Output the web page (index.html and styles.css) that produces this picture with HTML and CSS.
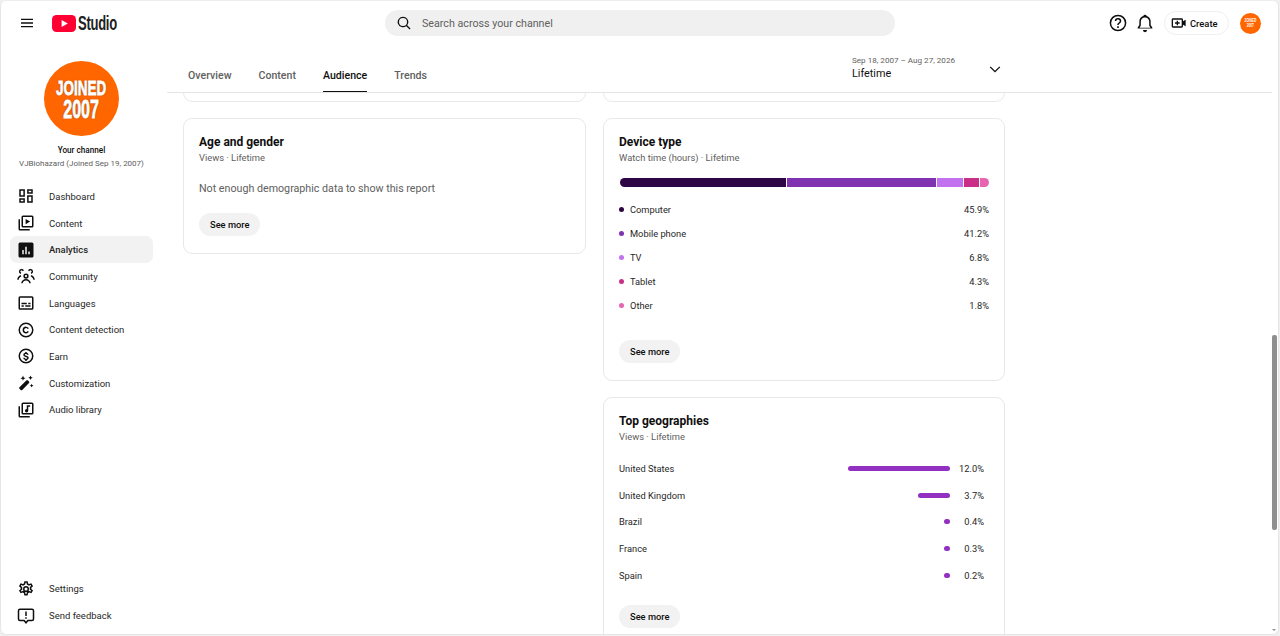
FILE: index.html
```html
<!DOCTYPE html>
<html lang="en">
<head>
  <meta charset="UTF-8">
  <meta name="viewport" content="width=device-width, initial-scale=1.0">
  <title>Channel analytics - YouTube Studio</title>
  <link rel="stylesheet" href="styles.css">
</head>
<body>
  <div class="app">
    <header class="topbar">
      <div class="brand">
        <svg class="icon menu-icon" viewBox="0 0 24 24"><path d="M3 5.5h18v2H3zM3 11h18v2H3zM3 16.5h18v2H3z"/></svg>
        <svg class="yt-logo" viewBox="0 0 24 17"><rect width="24" height="17" rx="4.5" fill="#ff0033"/><path d="M9.6 4.9v7.2l6.2-3.6z" fill="#fff"/></svg>
        <span class="studio">Studio</span>
      </div>
      <div class="search">
        <svg class="icon search-icon" viewBox="0 0 24 24"><path d="M10.5 2.5a8 8 0 0 1 6.3 12.9l5 5-1.4 1.4-5-5A8 8 0 1 1 10.500 2.500zm0 2a6 6 0 1 0 0 12 6 6 0 0 0 0-12z"/></svg>
        <span>Search across your channel</span>
      </div>
      <div class="top-actions">
        <svg class="icon action-icon" viewBox="0 0 24 24"><path d="M12 2a10 10 0 1 1 0 20 10 10 0 0 1 0-20zm0 1.800a8.200 8.200 0 1 0 0 16.400 8.200 8.200 0 0 0 0-16.400zM11 16h2v2h-2zm1-10a3.700 3.700 0 0 1 3.900 3.600c0 1.500-.9 2.200-1.800 2.900-.7.500-1.200 1-1.200 2h-1.800c0-1.700.9-2.400 1.800-3.100.7-.5 1.200-.9 1.200-1.700 0-1-.9-1.900-2.100-1.900-1.100 0-2 .8-2.100 1.900H8.100A3.800 3.800 0 0 1 12 6z"/></svg>
        <svg class="icon action-icon" viewBox="0 0 24 24"><path d="M12 2a2 2 0 0 1 2 1.700c3 .8 4.800 3.300 4.800 6.500v4.300l2 2.800v1.200H3.200v-1.200l2-2.800v-4.300c0-3.200 1.800-5.700 4.800-6.500A2 2 0 0 1 12 2zm0 3.300c-3 0-5 2.100-5 5V15l-1.500 2.700h13L17 15v-4.700c0-2.900-2-5-5-5zM9.500 20.500h5a2.500 2.500 0 0 1-5 0z"/></svg>
        <div class="create-btn">
          <svg class="icon create-icon" viewBox="0 0 24 24"><path d="M3 5h13a2 2 0 0 1 2 2v2.500l4-2.500v10l-4-2.500V17a2 2 0 0 1-2 2H3a2 2 0 0 1-2-2V7a2 2 0 0 1 2-2zm0 2v10h13V7zm5.500 1.500h2V11H13v2h-2.500v2.500h-2V13H6v-2h2.500z"/></svg>
          <span>Create</span>
        </div>
        <div class="avatar avatar-small"><div class="avatar-text"><span class="line-a">JOINED</span><span class="line-b">2007</span></div></div>
      </div>
    </header>

    <div class="layout">
      <aside class="sidebar">
        <div class="channel">
          <div class="avatar avatar-large"><div class="avatar-text"><span class="line-a">JOINED</span><span class="line-b">2007</span></div></div>
          <div class="channel-title">Your channel</div>
          <div class="channel-name">VJBiohazard (Joined Sep 19, 2007)</div>
        </div>
        <nav class="nav">
          <a class="nav-item"><svg class="icon" viewBox="0 0 24 24"><path d="M3 3h7.500v10H3zm2 2v6h3.500V5zM13.500 3H21v6h-7.500zm2 2v2H19V5zM3 15h7.500v6H3zm2 2v2h3.500v-2zM13.500 11H21v10h-7.500zm2 2v6H19v-6z"/></svg>Dashboard</a>
          <a class="nav-item"><svg class="icon" viewBox="0 0 24 24"><path d="M8 2h12a2 2 0 0 1 2 2v12a2 2 0 0 1-2 2H8a2 2 0 0 1-2-2V4a2 2 0 0 1 2-2zm0 2v12h12V4zM2 7h2v13h13v2H4a2 2 0 0 1-2-2zm9.500-.500 6 3.500-6 3.500z"/></svg>Content</a>
          <a class="nav-item active"><svg class="icon" viewBox="0 0 24 24"><path d="M4 2h16a2 2 0 0 1 2 2v16a2 2 0 0 1-2 2H4a2 2 0 0 1-2-2V4a2 2 0 0 1 2-2zm3 10v5.500h2V12zm4-4.500v10h2v-10zm4 6.500v3.500h2V14z"/></svg>Analytics</a>
          <a class="nav-item"><svg class="icon" viewBox="0 0 24 24"><path d="M12 8.500a3.500 3.500 0 1 1 0 7 3.500 3.500 0 0 1 0-7zm0 2a1.500 1.500 0 1 0 0 3 1.500 1.500 0 0 0 0-3zM6 2.500a3.500 3.500 0 0 1 3.300 2.300L7.500 5.600A1.500 1.500 0 1 0 5.500 7.400l-.3 2A3.500 3.500 0 0 1 6 2.500zm12 0a3.500 3.500 0 0 1 .8 6.900l-.3-2a1.500 1.500 0 1 0-2-1.800l-1.800-.8A3.500 3.500 0 0 1 18 2.500zM12 16c3.300 0 6 2.200 6.500 5.500h-2c-.5-2.200-2.300-3.500-4.500-3.500s-4 1.300-4.500 3.500h-2C6 18.200 8.700 16 12 16zM5 10.800l.7 1.900C3.800 13.300 2.600 14.800 2.300 17H.3C.6 14 2.300 11.600 5 10.800zm14 0c2.700.8 4.400 3.200 4.700 6.200h-2c-.3-2.200-1.500-3.700-3.400-4.300z"/></svg>Community</a>
          <a class="nav-item"><svg class="icon" viewBox="0 0 24 24"><path d="M4 3h16a2 2 0 0 1 2 2v14a2 2 0 0 1-2 2H4a2 2 0 0 1-2-2V5a2 2 0 0 1 2-2zm0 2v14h16V5zm2 6.500h7v2H6zm9 0h3v2h-3zM6 15h3v2H6zm5 0h7v2h-7z"/></svg>Languages</a>
          <a class="nav-item"><svg class="icon" viewBox="0 0 24 24"><path d="M12 2a10 10 0 1 1 0 20 10 10 0 0 1 0-20zm0 2a8 8 0 1 0 0 16 8 8 0 0 0 0-16zm0 3.500a4.500 4.500 0 0 1 3.900 2.300l-1.700 1a2.500 2.500 0 1 0 0 2.400l1.700 1A4.500 4.500 0 1 1 12 7.500z"/></svg>Content detection</a>
          <a class="nav-item"><svg class="icon" viewBox="0 0 24 24"><path d="M12 2a10 10 0 1 1 0 20 10 10 0 0 1 0-20zm0 2a8 8 0 1 0 0 16 8 8 0 0 0 0-16zm-1 2.500h2v1.100c1.300.3 2.300 1.200 2.500 2.600h-2c-.2-.7-.7-1-1.500-1-1 0-1.600.4-1.600 1 0 .7.600.9 2 1.300 1.700.4 3.200 1 3.200 3 0 1.500-1.100 2.400-2.600 2.700v1.300h-2v-1.300c-1.500-.3-2.600-1.300-2.800-2.800h2c.2.800.8 1.200 1.800 1.200 1.100 0 1.600-.5 1.600-1.100 0-.7-.6-.9-2.200-1.300-1.600-.5-3-1.100-3-2.900 0-1.400 1.100-2.400 2.600-2.700z"/></svg>Earn</a>
          <a class="nav-item"><svg class="icon" viewBox="0 0 24 24"><path d="M14.500 8.500 16 10a1.500 1.500 0 0 1 0 2.100L7 21.200a1.500 1.500 0 0 1-2.100 0l-1.600-1.600a1.500 1.500 0 0 1 0-2.100l9.100-9a1.500 1.500 0 0 1 2.100 0zM8 2l1 2.500L11.500 5.500 9 6.500 8 9 7 6.500 4.500 5.500 7 4.500zm10 0 .9 2.100L21 5l-2.100.9L18 8l-.9-2.100L15 5l2.100-.9zm1.500 11 .8 1.700 1.700.8-1.700.8-.8 1.700-.8-1.700-1.700-.8 1.700-.8z"/></svg>Customization</a>
          <a class="nav-item"><svg class="icon" viewBox="0 0 24 24"><path d="M8 2h12a2 2 0 0 1 2 2v12a2 2 0 0 1-2 2H8a2 2 0 0 1-2-2V4a2 2 0 0 1 2-2zm0 2v12h12V4zM2 7h2v13h13v2H4a2 2 0 0 1-2-2zm13-1.500h2.500v2H15v5.500a2.200 2.200 0 1 1-2-2.200V5.500z"/></svg>Audio library</a>
        </nav>
        <nav class="nav nav-bottom">
          <a class="nav-item"><svg class="icon" viewBox="0 0 24 24"><path d="M12 8a4 4 0 1 1 0 8 4 4 0 0 1 0-8zm0 2a2 2 0 1 0 0 4 2 2 0 0 0 0-4zM9.800 1.500h4.400l.6 3 1.500.9 2.900-1 2.200 3.800-2.300 2c.1.500.1 1.200 0 1.700l2.300 2-2.200 3.800-2.900-1-1.500.9-.6 3H9.800l-.6-3-1.500-.9-2.900 1-2.200-3.800 2.300-2a5 5 0 0 1 0-1.700l-2.300-2 2.200-3.800 2.900 1 1.500-.9zm1.600 2-.5 2.600-2.700 1.500-2.500-.9-.6 1.100 2 1.700c-.2 1-.2 2 0 3l-2 1.700.6 1.100 2.500-.9 2.700 1.500.5 2.600h1.200l.5-2.600 2.700-1.500 2.500.9.600-1.100-2-1.700c.2-1 .2-2 0-3l2-1.700-.6-1.100-2.500.9-2.700-1.500-.5-2.600z"/></svg>Settings</a>
          <a class="nav-item"><svg class="icon" viewBox="0 0 24 24"><path d="M4 2h16a3 3 0 0 1 3 3v11a3 3 0 0 1-3 3h-5l-3 3.500L9 19H4a3 3 0 0 1-3-3V5a3 3 0 0 1 3-3zm0 2a1 1 0 0 0-1 1v11a1 1 0 0 0 1 1h6l2 2.300 2-2.300h6a1 1 0 0 0 1-1V5a1 1 0 0 0-1-1zm7 2h2v6h-2zm0 7.500h2v2h-2z"/></svg>Send feedback</a>
        </nav>
      </aside>

      <main class="main">
        <div class="tabs-bar">
          <div class="tabs">
            <span class="tab">Overview</span>
            <span class="tab">Content</span>
            <span class="tab active">Audience</span>
            <span class="tab">Trends</span>
          </div>
          <div class="date-picker">
            <div>
              <div class="date-range">Sep 18, 2007 – Aug 27, 2026</div>
              <div class="date-label">Lifetime</div>
            </div>
            <svg class="icon chevron" viewBox="0 0 24 24"><path d="M4.600 7.500 12 14.900l7.400-7.400 1.600 1.600-9 9-9-9z"/></svg>
          </div>
        </div>

        <div class="report">
          <div class="column">
            <div class="card card-stub"></div>
            <section class="card card-age">
              <h2>Age and gender</h2>
              <div class="card-sub">Views · Lifetime</div>
              <p class="empty">Not enough demographic data to show this report</p>
              <span class="see-more">See more</span>
            </section>
          </div>
          <div class="column column-right">
            <div class="card card-stub"></div>
            <section class="card card-device">
              <h2>Device type</h2>
              <div class="card-sub">Watch time (hours) · Lifetime</div>
              <div class="stack-bar">
                <span class="seg c-computer" style="width:45.1%"></span>
                <span class="seg c-mobile" style="width:40.4%"></span>
                <span class="seg c-tv" style="width:6.8%"></span>
                <span class="seg c-tablet" style="width:4.2%"></span>
                <span class="seg c-other" style="flex:1"></span>
              </div>
              <ul class="legend">
                <li><i class="dot c-computer"></i><span>Computer</span><b>45.9%</b></li>
                <li><i class="dot c-mobile"></i><span>Mobile phone</span><b>41.2%</b></li>
                <li><i class="dot c-tv"></i><span>TV</span><b>6.8%</b></li>
                <li><i class="dot c-tablet"></i><span>Tablet</span><b>4.3%</b></li>
                <li><i class="dot c-other"></i><span>Other</span><b>1.8%</b></li>
              </ul>
              <span class="see-more">See more</span>
            </section>
            <section class="card card-geo">
              <h2>Top geographies</h2>
              <div class="card-sub">Views · Lifetime</div>
              <ul class="geo-list">
                <li><span>United States</span><i class="geo-bar" style="width:102px"></i><b>12.0%</b></li>
                <li><span>United Kingdom</span><i class="geo-bar" style="width:32px"></i><b>3.7%</b></li>
                <li><span>Brazil</span><i class="geo-bar" style="width:6px"></i><b>0.4%</b></li>
                <li><span>France</span><i class="geo-bar" style="width:6px"></i><b>0.3%</b></li>
                <li><span>Spain</span><i class="geo-bar" style="width:6px"></i><b>0.2%</b></li>
              </ul>
              <span class="see-more">See more</span>
            </section>
          </div>
        </div>
      </main>
    </div>
    <div class="scroll-thumb"></div>
    <div class="scroll-arrow"></div>
  </div>
</body>
</html>
```

FILE: styles.css
```css
* {
  box-sizing: border-box;
}

html, body {
  margin: 0;
  height: 100%;
  overflow: hidden;
  background: #f0f0f0;
}

body {
  font-family: Roboto, "Liberation Sans", sans-serif;
  font-size: 10px;
  color: #0f0f0f;
}

.app {
  position: relative;
  width: 1279px;
  height: 635px;
  background: #fff;
  border: 1px solid #e6e6e6;
  border-top-color: #ededed;
  border-radius: 6px;
  display: flex;
  flex-direction: column;
  overflow: hidden;
}

.icon {
  width: 16px;
  height: 16px;
  fill: #0f0f0f;
  flex: none;
}

/* top bar */
.topbar {
  height: 44px;
  flex: none;
  display: flex;
  align-items: center;
}

.brand {
  width: 384px;
  display: flex;
  align-items: center;
  padding-left: 18px;
}

.menu-icon {
  margin-right: 17px;
}

.yt-logo {
  width: 24px;
  height: 17px;
}

.studio {
  margin-left: 2px;
  font-family: "Liberation Sans", sans-serif;
  font-size: 20px;
  font-weight: 700;
  letter-spacing: -0.4px;
  color: #212121;
  transform: scaleX(0.65);
  transform-origin: left center;
}

.search {
  width: 510px;
  height: 26px;
  border-radius: 13px;
  background: #f0f0f0;
  display: flex;
  align-items: center;
  gap: 10px;
  padding-left: 11px;
  font-size: 10.7px;
  color: #606060;
}

.top-actions {
  margin-left: auto;
  display: flex;
  align-items: center;
  padding-right: 17px;
}

.action-icon {
  width: 20px;
  height: 20px;
  margin-right: 7px;
}

.create-btn {
  height: 24px;
  width: 65px;
  margin-left: 2px;
  margin-right: 11px;
  padding-left: 6px;
  border: 1px solid #efefef;
  border-radius: 12px;
  display: flex;
  align-items: center;
  gap: 3px;
  font-size: 9.4px;
  font-weight: 500;
}

.create-icon {
  width: 16px;
  height: 16px;
}

.avatar {
  border-radius: 50%;
  background: #ff6600;
  display: flex;
  align-items: center;
  justify-content: center;
  color: #fff;
  font-family: "Liberation Sans", sans-serif;
  font-weight: 700;
  flex: none;
}

.avatar-text {
  text-align: center;
  transform: scaleX(0.64);
}

.line-a, .line-b {
  display: block;
  white-space: nowrap;
}

.avatar-small {
  width: 21px;
  height: 21px;
  font-size: 5px;
  line-height: 5px;
}

.avatar-large {
  width: 75px;
  height: 75px;
  -webkit-text-stroke: 0.8px #fff;
  text-shadow: 0 0 2px #4a3020;
}

.avatar-large .line-a {
  font-size: 21px;
  line-height: 21px;
}

.avatar-large .line-b {
  font-size: 25px;
  line-height: 23px;
}

/* sidebar */
.layout {
  flex: 1;
  display: flex;
  min-height: 0;
}

.sidebar {
  width: 166px;
  flex: none;
  display: flex;
  flex-direction: column;
  padding: 16px 14px 5px 9px;
}

.channel {
  display: flex;
  flex-direction: column;
  align-items: center;
  margin-bottom: 13px;
}

.channel-title {
  margin-top: 8px;
  font-size: 8.2px;
  font-weight: 500;
  line-height: 13px;
}

.channel-name {
  font-size: 8px;
  line-height: 13px;
  color: #606060;
}

.nav {
  display: flex;
  flex-direction: column;
}

.nav-bottom {
  margin-top: auto;
}

.nav-item {
  height: 26.7px;
  display: flex;
  align-items: center;
  gap: 14px;
  padding-left: 7px;
  border-radius: 7px;
  font-size: 9.5px;
  color: #282828;
}

.nav-item .icon {
  width: 18px;
  height: 18px;
}

.nav-item.active {
  background: #f2f2f2;
  font-weight: 500;
}

/* tabs */
.main {
  flex: 1;
  min-width: 0;
  display: flex;
  flex-direction: column;
  margin-right: 6px;
}

.tabs-bar {
  height: 48px;
  flex: none;
  border-bottom: 1px solid #e5e5e5;
  display: flex;
  padding-left: 21px;
}

.tabs {
  width: 664px;
  display: flex;
  gap: 27px;
  padding-top: 5px;
}

.tab {
  height: 42px;
  line-height: 52px;
  font-size: 10.6px;
  color: #606060;
  font-weight: 500;
}

.tab.active {
  color: #0f0f0f;
  border-bottom: 1.5px solid #0f0f0f;
}

.date-picker {
  width: 150px;
  display: flex;
  align-items: flex-start;
  justify-content: space-between;
  padding-top: 10px;
}

.date-range {
  font-size: 8.1px;
  line-height: 11px;
  color: #606060;
}

.date-label {
  margin-top: 1px;
  font-size: 10.8px;
  line-height: 14px;
  color: #0f0f0f;
}

.chevron {
  width: 14px;
  height: 14px;
  margin-top: 7px;
}

/* report cards */
.report {
  flex: 1;
  min-height: 0;
  overflow: hidden;
  display: flex;
  gap: 16px;
  padding-left: 16px;
}

.column {
  width: 403px;
  display: flex;
  flex-direction: column;
  gap: 16px;
}

.column-right {
  width: 402.5px;
  margin-left: 0.5px;
}

.column-right .card {
  padding-left: 15.5px;
  padding-right: 15px;
}

.card {
  flex: none;
  border: 1px solid #e8e8e8;
  border-radius: 9px;
  padding: 16px 16px 16px 15px;
}

.card-stub {
  height: 21px;
  padding: 0;
  margin-top: -12px;
}

.column-right .card-stub {
  padding: 0;
}

.card h2 {
  margin: 0;
  font-size: 12px;
  line-height: 15px;
  font-weight: 700;
}

.card-sub {
  margin-top: 1px;
  font-size: 9.35px;
  line-height: 14px;
  color: #606060;
}

.card-age {
  height: 136px;
}

.empty {
  margin: 17px 0 17px;
  font-size: 10.7px;
  line-height: 14px;
  color: #606060;
}

.see-more {
  display: inline-block;
  height: 23px;
  line-height: 23px;
  padding: 0 11px;
  border-radius: 12px;
  background: #f2f2f2;
  font-size: 9.3px;
  font-weight: 500;
}

.card-device {
  height: 263px;
}

.stack-bar {
  margin-top: 13px;
  margin-left: 1px;
  height: 9px;
  display: flex;
  gap: 1px;
  border-radius: 5px;
  overflow: hidden;
}

.seg {
  display: block;
  height: 100%;
}

.c-computer { background: #2f0645; }
.c-mobile { background: #8033b0; }
.c-tv { background: #c272ee; }
.c-tablet { background: #c92f87; }
.c-other { background: #e565b0; }

.legend, .geo-list {
  list-style: none;
  margin: 0;
  padding: 0;
}

.legend {
  margin-top: 10px;
  margin-bottom: 23px;
}

.legend li {
  height: 24px;
  display: flex;
  align-items: center;
  font-size: 9.3px;
  color: #282828;
}

.legend b, .geo-list b {
  font-weight: 400;
  color: #282828;
}

.legend b {
  margin-left: auto;
}

.dot {
  width: 5px;
  height: 5px;
  border-radius: 50%;
  margin-right: 6px;
}

.card-geo {
  height: 260px;
}

.geo-list {
  margin-top: 11px;
  margin-bottom: 16px;
}

.geo-list li {
  height: 26.8px;
  display: flex;
  align-items: center;
  font-size: 9.3px;
  color: #282828;
}

.geo-list span {
  flex: 1;
}

.geo-bar {
  height: 5px;
  border-radius: 3px;
  background: #9230c2;
}

.geo-list b {
  width: 39px;
  padding-right: 5px;
  text-align: right;
}

.scroll-thumb {
  position: absolute;
  right: 1px;
  top: 334px;
  width: 5px;
  height: 195px;
  border-radius: 2px;
  background: #8f8f8f;
}

.scroll-arrow {
  position: absolute;
  right: 2px;
  bottom: 3px;
  border-left: 2px solid transparent;
  border-right: 2px solid transparent;
  border-top: 2px solid #8f8f8f;
}
```
